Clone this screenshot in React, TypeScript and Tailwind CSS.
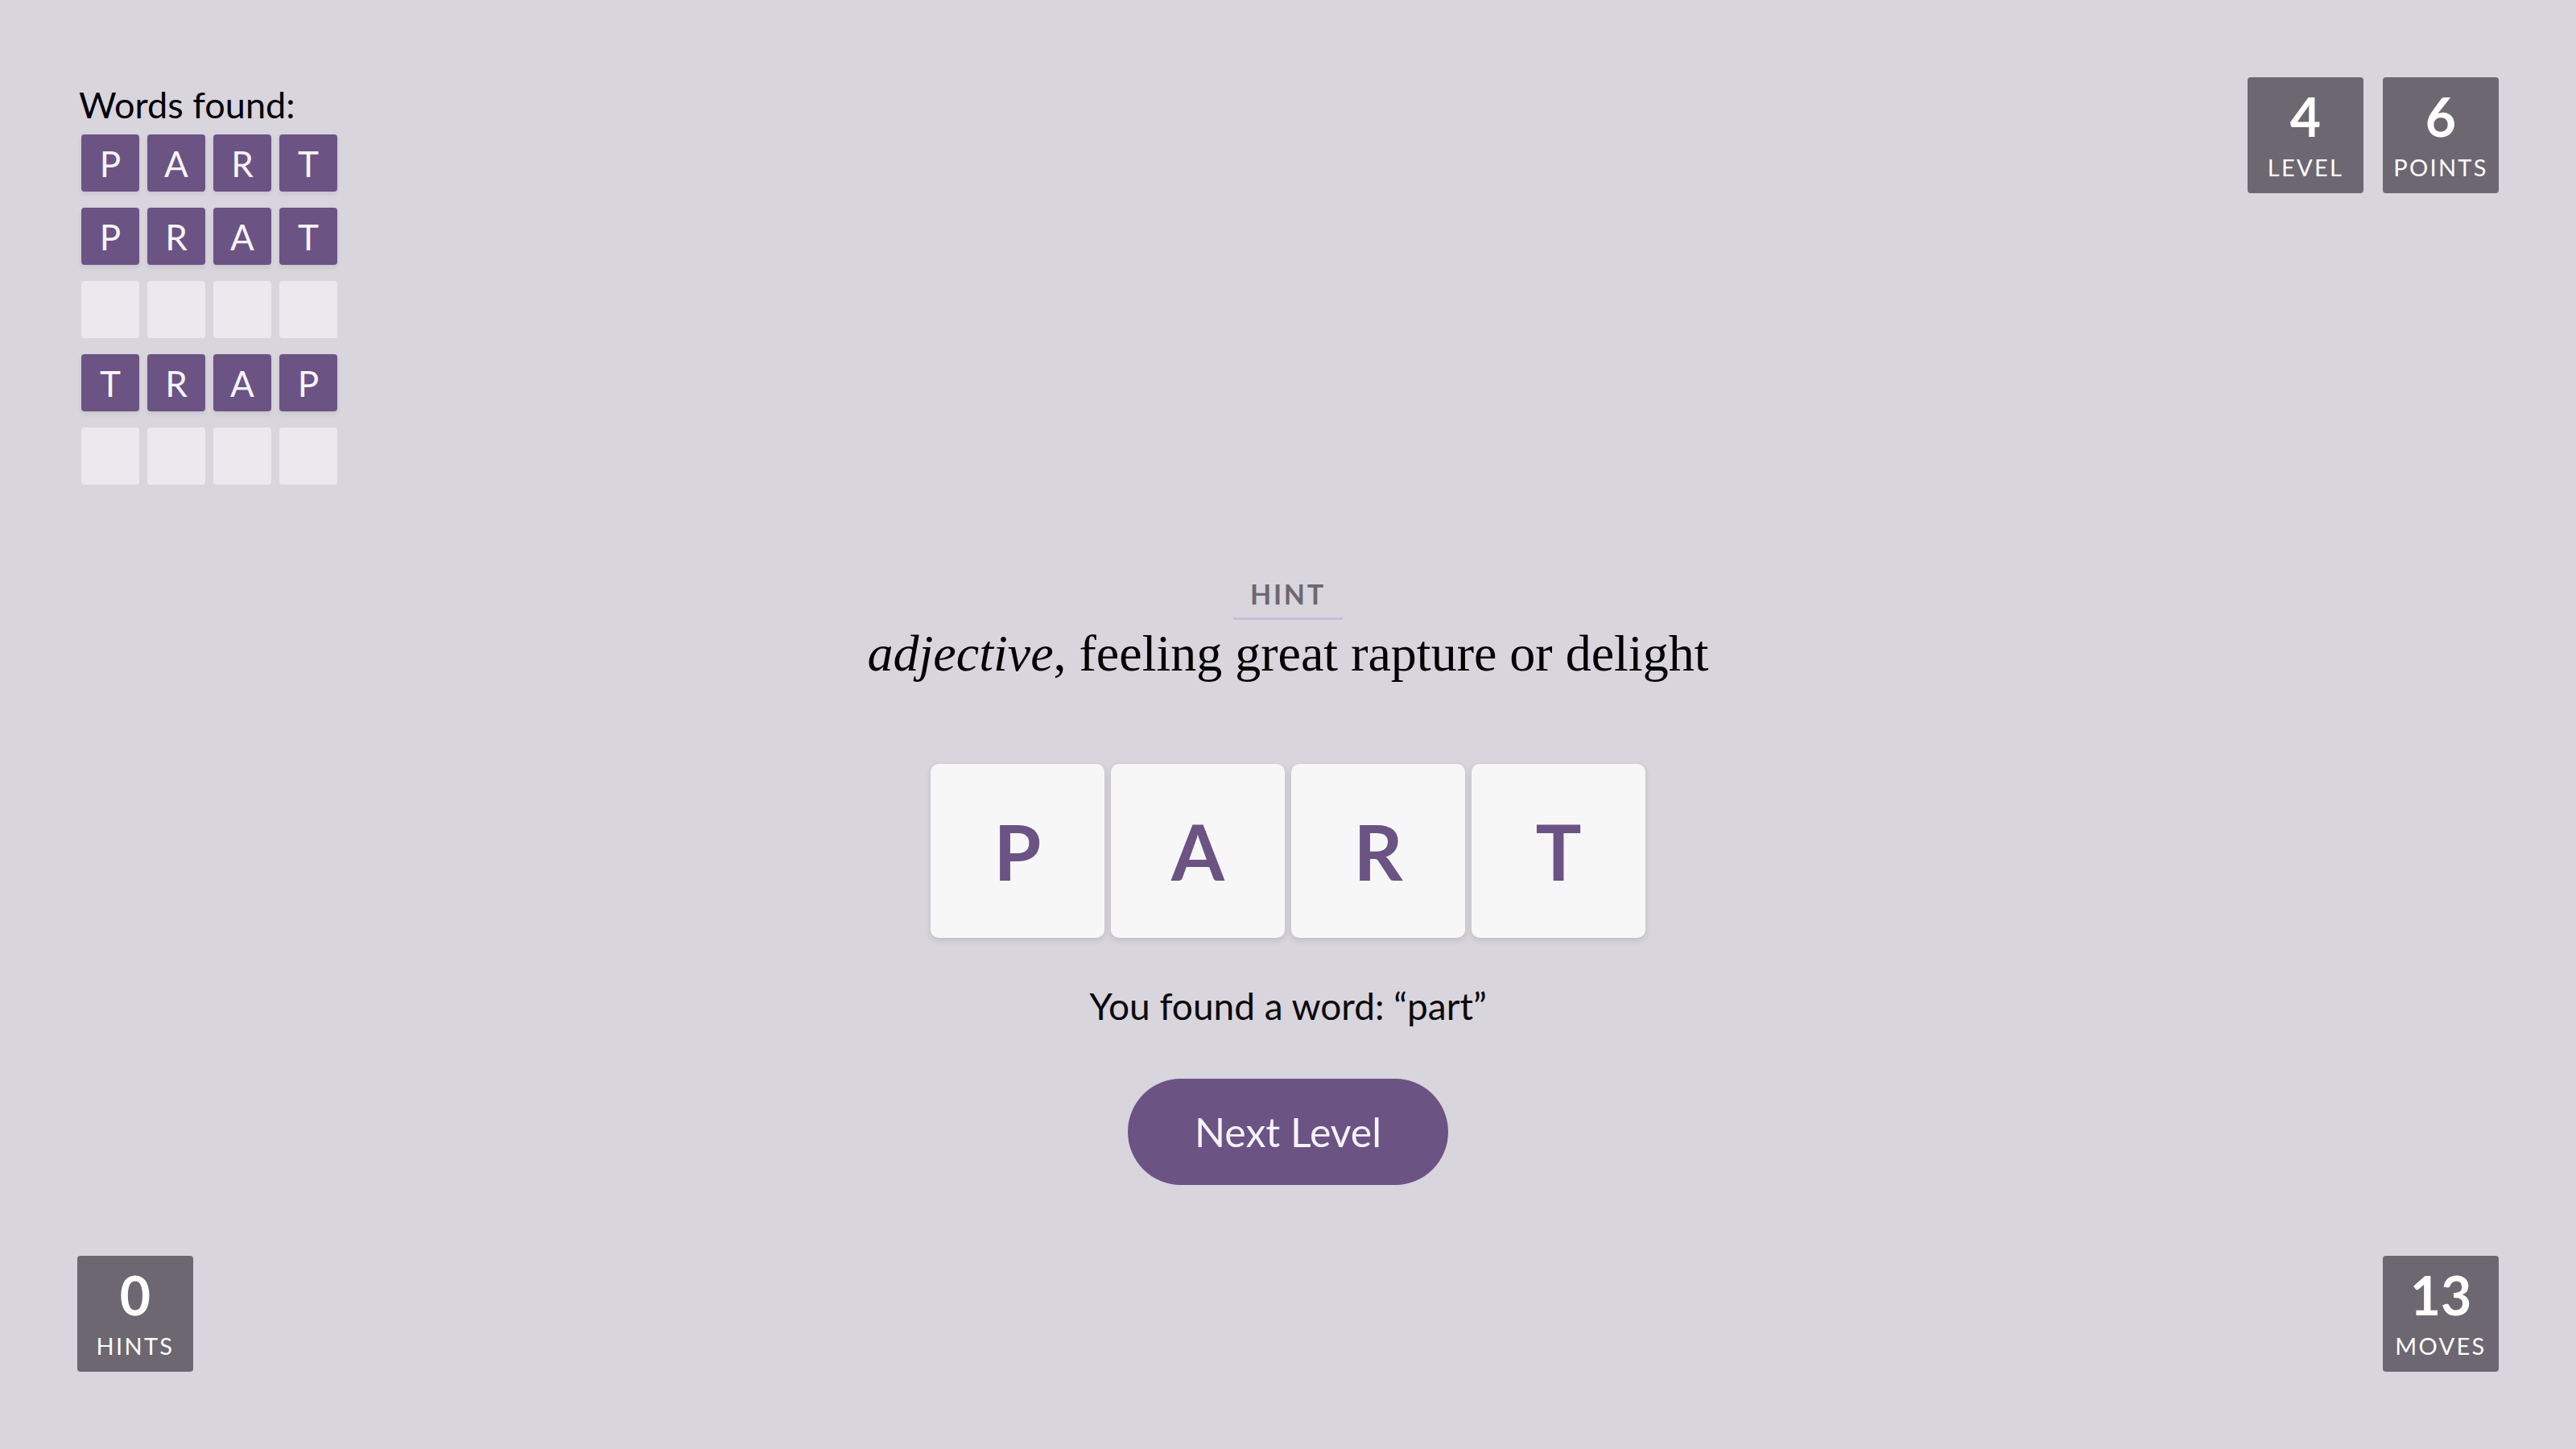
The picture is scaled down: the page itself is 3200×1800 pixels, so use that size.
import React from 'react';

const found: (string | null)[] = ['PART', 'PRAT', null, 'TRAP', null];
const current = ['P', 'A', 'R', 'T'];

const sans = { fontFamily: 'Lato, "Open Sans", sans-serif' };

const StatBox: React.FC<{ value: string; label: string }> = ({ value, label }) => (
  <div className="w-[144px] h-[144px] rounded-[4px] bg-[#6c6771] text-white flex flex-col items-center pt-[16px]">
    <span className="text-[66px] font-bold leading-none">{value}</span>
    <span className="mt-[15px] text-[29px] leading-none tracking-[0.08em]">{label}</span>
  </div>
);

const WordsFound: React.FC = () => (
  <div className="flex flex-col">
    <div className="text-[45px] leading-[58px] text-black ml-[2px] mt-[5px]">Words found:</div>
    <div className="mt-[8px] flex flex-col gap-[20px]">
      {found.map((word, i) => (
        <div key={i} className="flex gap-[10px] pl-[5px]">
          {[0, 1, 2, 3].map((j) =>
            word ? (
              <div
                key={j}
                className="w-[72px] h-[71px] rounded-[4px] bg-[#6b5384] text-[#f7f5fa] text-[44px] leading-none flex items-center justify-center shadow-[0_3px_6px_rgba(0,0,0,0.08)]"
              >
                {word[j]}
              </div>
            ) : (
              <div key={j} className="w-[72px] h-[71px] rounded-[4px] bg-[#ebe9ee]" />
            )
          )}
        </div>
      ))}
    </div>
  </div>
);

export default function App() {
  return (
    <div className="w-[3200px] h-[1800px] bg-[#d8d5dd] p-[96px] flex flex-col" style={sans}>
      <div className="flex justify-between items-start">
        <WordsFound />
        <div className="flex gap-[24px]">
          <StatBox value="4" label="LEVEL" />
          <StatBox value="6" label="POINTS" />
        </div>
      </div>

      <div className="flex flex-col items-center mt-[119px]">
        <div className="text-[34px] font-bold leading-none tracking-[0.08em] text-[#6c6771] px-[21px] pb-[12px] border-b-[3px] border-[#c9bcd8]">
          HINT
        </div>
        <div
          className="mt-[10px] text-[64px] leading-none text-black"
          style={{ fontFamily: '"Liberation Serif", serif' }}
        >
          <i>adjective</i>, feeling great rapture or delight
        </div>

        <div className="mt-[105px] flex gap-[8px]">
          {current.map((ch, i) => (
            <div
              key={i}
              className="w-[216px] h-[216px] rounded-[10px] bg-[#f7f7f7] flex items-center justify-center text-[95px] font-bold leading-none text-[#6b5384] shadow-[0_3px_8px_rgba(0,0,0,0.12)]"
            >
              {ch}
            </div>
          ))}
        </div>

        <div className="mt-[62px] text-[46px] leading-none text-[#0a0a0a]">You found a word: “part”</div>

        <button className="mt-[67px] w-[398px] h-[132px] rounded-full bg-[#6b5384] text-[#f7f3fb] text-[50px] leading-none flex items-center justify-center">
          Next Level
        </button>
      </div>

      <div className="mt-auto flex justify-between items-end">
        <StatBox value="0" label="HINTS" />
        <StatBox value="13" label="MOVES" />
      </div>
    </div>
  );
}
